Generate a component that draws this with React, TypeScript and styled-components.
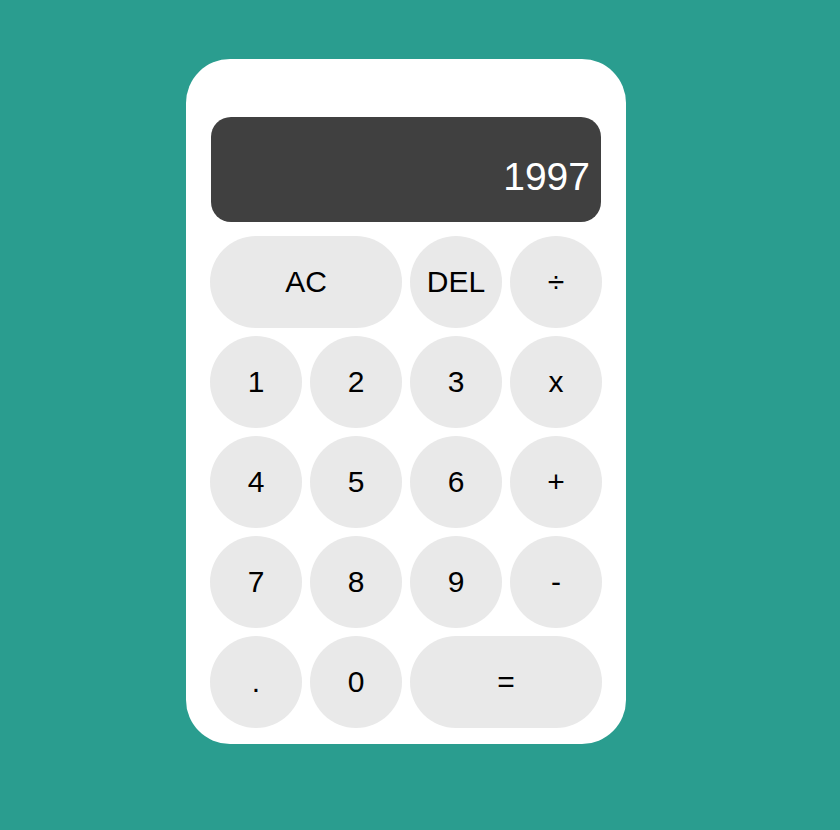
import React, { useState } from 'react';
import styled, { createGlobalStyle } from 'styled-components';

const GlobalStyle = createGlobalStyle`
	html, body {
		margin: 0;
		padding: 0;
		background-color: #2a9d8f;
		font-family: 'Liberation Sans', Arial, sans-serif;
	}
`;

const Page = styled.div`
	min-height: 830px;
	box-sizing: border-box;
	padding: 59px 0 0 186px;
`;

const Calculator = styled.div`
	width: 440px;
	box-sizing: border-box;
	padding: 58px 24px 16px;
	background-color: #ffffff;
	border-radius: 44px;
`;

const Display = styled.div`
	height: 105px;
	margin: 0 1px 14px;
	box-sizing: border-box;
	padding: 0 11px 23px;
	display: flex;
	align-items: flex-end;
	justify-content: flex-end;
	background-color: #404040;
	border-radius: 20px;
	color: #ffffff;
	font-size: 39px;
`;

const Keypad = styled.div`
	display: grid;
	grid-template-columns: repeat(4, 92px);
	grid-auto-rows: 92px;
	gap: 8px;
`;

const Key = styled.button<{ $wide?: boolean }>`
	grid-column: ${({ $wide }) => ($wide ? 'span 2' : 'auto')};
	border: none;
	border-radius: 46px;
	padding: 0;
	background-color: #e9e9e9;
	color: #000000;
	font-family: 'Liberation Sans', Arial, sans-serif;
	font-size: 30px;
	cursor: pointer;
`;

const keys = [
	{ label: 'AC', wide: true },
	{ label: 'DEL' },
	{ label: '÷' },
	{ label: '1' },
	{ label: '2' },
	{ label: '3' },
	{ label: 'x' },
	{ label: '4' },
	{ label: '5' },
	{ label: '6' },
	{ label: '+' },
	{ label: '7' },
	{ label: '8' },
	{ label: '9' },
	{ label: '-' },
	{ label: '.' },
	{ label: '0' },
	{ label: '=', wide: true },
];

function App() {
	const [value] = useState<string>('1997');

	return (
		<>
			<GlobalStyle />
			<Page>
				<Calculator>
					<Display>{value}</Display>
					<Keypad>
						{keys.map((item, idx) => (
							<Key key={idx} $wide={item.wide}>{item.label}</Key>
						))}
					</Keypad>
				</Calculator>
			</Page>
		</>
	);
}

export default App;
